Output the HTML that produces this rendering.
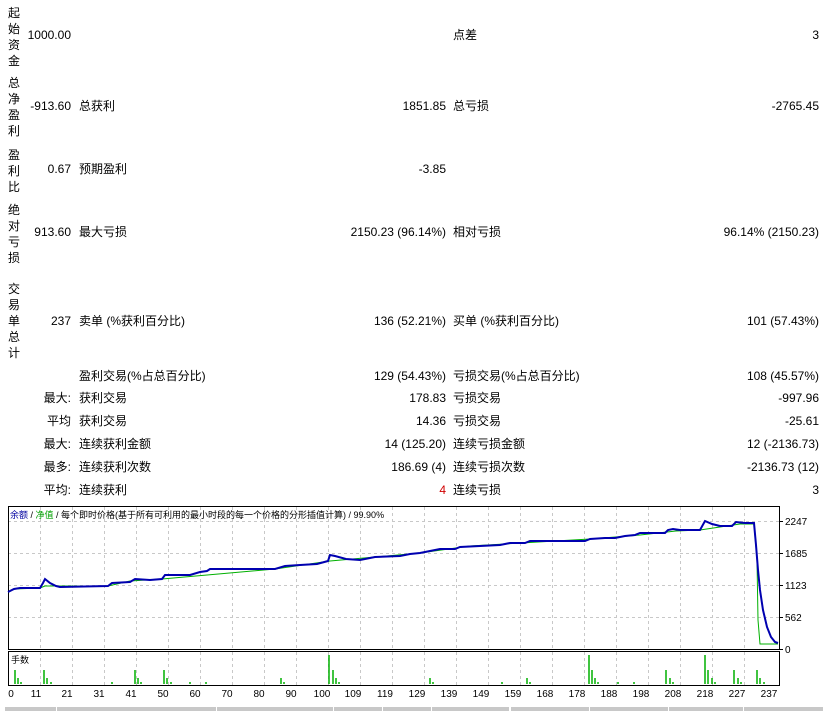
<!DOCTYPE html>
<html><head><meta charset="utf-8"><style>
html,body{margin:0;padding:0;background:#fff;width:836px;height:711px;overflow:hidden;position:relative;font-family:"Liberation Sans","Noto Sans CJK SC",sans-serif;font-size:12px;color:#000}
.t{position:absolute;white-space:nowrap;line-height:14px}
.r{text-align:right}
.v{position:absolute;left:8px;width:13px;line-height:16px;font-size:12px}
</style></head><body>
<div class="v" style="top:5px">起<br>始<br>资<br>金</div>
<div class="v" style="top:75px">总<br>净<br>盈<br>利</div>
<div class="v" style="top:147px">盈<br>利<br>比</div>
<div class="v" style="top:202px">绝<br>对<br>亏<br>损</div>
<div class="v" style="top:281px">交<br>易<br>单<br>总<br>计</div>

<div class="t r" style="top:28px;right:765px">1000.00</div>
<div class="t" style="top:28px;left:453px">点差</div>
<div class="t r" style="top:28px;right:17px">3</div>

<div class="t r" style="top:99px;right:765px">-913.60</div>
<div class="t" style="top:99px;left:79px">总获利</div>
<div class="t r" style="top:99px;right:390px">1851.85</div>
<div class="t" style="top:99px;left:453px">总亏损</div>
<div class="t r" style="top:99px;right:17px">-2765.45</div>

<div class="t r" style="top:162px;right:765px">0.67</div>
<div class="t" style="top:162px;left:79px">预期盈利</div>
<div class="t r" style="top:162px;right:390px">-3.85</div>

<div class="t r" style="top:225px;right:765px">913.60</div>
<div class="t" style="top:225px;left:79px">最大亏损</div>
<div class="t r" style="top:225px;right:390px">2150.23 (96.14%)</div>
<div class="t" style="top:225px;left:453px">相对亏损</div>
<div class="t r" style="top:225px;right:17px">96.14% (2150.23)</div>

<div class="t r" style="top:314px;right:765px">237</div>
<div class="t" style="top:314px;left:79px">卖单 (%获利百分比)</div>
<div class="t r" style="top:314px;right:390px">136 (52.21%)</div>
<div class="t" style="top:314px;left:453px">买单 (%获利百分比)</div>
<div class="t r" style="top:314px;right:17px">101 (57.43%)</div>

<div class="t" style="top:369px;left:79px">盈利交易(%占总百分比)</div>
<div class="t r" style="top:369px;right:390px">129 (54.43%)</div>
<div class="t" style="top:369px;left:453px">亏损交易(%占总百分比)</div>
<div class="t r" style="top:369px;right:17px">108 (45.57%)</div>

<div class="t r" style="top:391px;right:765px">最大:</div>
<div class="t" style="top:391px;left:79px">获利交易</div>
<div class="t r" style="top:391px;right:390px">178.83</div>
<div class="t" style="top:391px;left:453px">亏损交易</div>
<div class="t r" style="top:391px;right:17px">-997.96</div>

<div class="t r" style="top:414px;right:765px">平均</div>
<div class="t" style="top:414px;left:79px">获利交易</div>
<div class="t r" style="top:414px;right:390px">14.36</div>
<div class="t" style="top:414px;left:453px">亏损交易</div>
<div class="t r" style="top:414px;right:17px">-25.61</div>

<div class="t r" style="top:437px;right:765px">最大:</div>
<div class="t" style="top:437px;left:79px">连续获利金额</div>
<div class="t r" style="top:437px;right:390px">14 (125.20)</div>
<div class="t" style="top:437px;left:453px">连续亏损金额</div>
<div class="t r" style="top:437px;right:17px">12 (-2136.73)</div>

<div class="t r" style="top:460px;right:765px">最多:</div>
<div class="t" style="top:460px;left:79px">连续获利次数</div>
<div class="t r" style="top:460px;right:390px">186.69 (4)</div>
<div class="t" style="top:460px;left:453px">连续亏损次数</div>
<div class="t r" style="top:460px;right:17px">-2136.73 (12)</div>

<div class="t r" style="top:483px;right:765px">平均:</div>
<div class="t" style="top:483px;left:79px">连续获利</div>
<div class="t r" style="top:483px;right:390px;color:#d00000">4</div>
<div class="t" style="top:483px;left:453px">连续亏损</div>
<div class="t r" style="top:483px;right:17px">3</div>

<svg style="position:absolute;left:0;top:0" width="836" height="711" xmlns="http://www.w3.org/2000/svg" font-family="Liberation Sans, Noto Sans CJK SC, sans-serif">
<g stroke="#c8c8c8" stroke-dasharray="3,3" stroke-width="1">
<line x1="8" x2="779" y1="521.5" y2="521.5"/><line x1="8" x2="779" y1="553.5" y2="553.5"/><line x1="8" x2="779" y1="585.5" y2="585.5"/><line x1="8" x2="779" y1="617.5" y2="617.5"/>
<path d="M40.5 507V649M72.5 507V649M104.5 507V649M136.5 507V649M168.5 507V649M200.5 507V649M232.5 507V649M264.5 507V649M296.5 507V649M328.5 507V649M360.5 507V649M392.5 507V649M424.5 507V649M456.5 507V649M488.5 507V649M520.5 507V649M552.5 507V649M584.5 507V649M616.5 507V649M648.5 507V649M680.5 507V649M712.5 507V649M744.5 507V649"/>
<path d="M40.5 652V685M72.5 652V685M104.5 652V685M136.5 652V685M168.5 652V685M200.5 652V685M232.5 652V685M264.5 652V685M296.5 652V685M328.5 652V685M360.5 652V685M392.5 652V685M424.5 652V685M456.5 652V685M488.5 652V685M520.5 652V685M552.5 652V685M584.5 652V685M616.5 652V685M648.5 652V685M680.5 652V685M712.5 652V685M744.5 652V685"/>
</g>
<rect x="8.5" y="506.5" width="771" height="143" fill="none" stroke="#000"/>
<rect x="8.5" y="651.5" width="771" height="34" fill="none" stroke="#000"/>
<g stroke="#000"><path d="M779 521.5h4M779 553.5h4M779 585.5h4M779 617.5h4M779 649.5h4"/></g>
<text x="10" y="518" font-size="9" fill="#000"><tspan fill="#0000a0">余额</tspan> / <tspan fill="#00a000">净值</tspan> / 每个即时价格(基于所有可利用的最小时段的每一个价格的分形插值计算) / 99.90%</text>
<polyline fill="none" stroke="#00b000" stroke-width="1" points="9,592 14,589 40,588 45,586 108,586 130,581 162,579 275,569 330,561 420,553 470,546 590,539 640,535 676,531 700,530 740,524 754,524 757,560 758,620 760,644 778,644"/>
<polyline fill="none" stroke="#0000b0" stroke-width="2" points="8,592 14,589 20,588 40,588 43,583 45,579 50,583 56,586 60,587 108,586 112,583 130,582 135,579 150,580 162,579 165,575 190,575 200,572 207,571 210,569 275,569 285,566 300,565 317,564 328,561 330,555 335,556 346,559 360,560 365,559 375,557 400,556 410,554 420,553 430,551 440,549 455,549 460,547 480,546 500,545 510,543 525,543 530,541 585,541 590,539 605,538 615,538 625,536 635,535 640,533 665,533 668,530 673,529 680,530 700,530 705,521 712,524 720,526 732,526 736,522 745,523 754,523 756,545 758,570 760,590 763,610 767,627 771,637 775,642 778,643"/>
<g stroke="#00b000" stroke-width="1.5">
<path d="M15 684v-14M18 684v-6M21 684v-2M44 684v-14M47 684v-6M51 684v-2M112 684v-2M135 684v-14M138 684v-6M141 684v-2M164 684v-14M167 684v-6M171 684v-2M190 684v-2M206 684v-2M281 684v-6M284 684v-2M329 684v-29M333 684v-14M336 684v-6M339 684v-2M430 684v-6M433 684v-2M502 684v-2M527 684v-6M530 684v-2M589 684v-29M592 684v-14M595 684v-6M598 684v-2M618 684v-2M634 684v-2M666 684v-14M670 684v-6M673 684v-2M705 684v-29M708 684v-14M712 684v-6M715 684v-2M734 684v-14M738 684v-6M741 684v-2M757 684v-14M760 684v-6M764 684v-2"/>
</g>
<text x="11" y="663" font-size="9">手数</text>
<g font-size="10" fill="#000">
<text x="785" y="525">2247</text><text x="785" y="557">1685</text><text x="785" y="589">1123</text><text x="785" y="621">562</text><text x="785" y="653">0</text>
</g>
<g font-size="10" fill="#000" text-anchor="middle">
<text x="11" y="697">0</text><text x="36" y="697">11</text><text x="67" y="697">21</text><text x="99" y="697">31</text><text x="131" y="697">41</text><text x="163" y="697">50</text><text x="195" y="697">60</text><text x="227" y="697">70</text><text x="259" y="697">80</text><text x="291" y="697">90</text><text x="322" y="697">100</text><text x="353" y="697">109</text><text x="385" y="697">119</text><text x="417" y="697">129</text><text x="449" y="697">139</text><text x="481" y="697">149</text><text x="513" y="697">159</text><text x="545" y="697">168</text><text x="577" y="697">178</text><text x="609" y="697">188</text><text x="641" y="697">198</text><text x="673" y="697">208</text><text x="705" y="697">218</text><text x="737" y="697">227</text><text x="769" y="697">237</text>
</g>
<g fill="#c8c8c8">
<rect x="5" y="707" width="51" height="4"/><rect x="57" y="707" width="159" height="4"/><rect x="217" y="707" width="116" height="4"/><rect x="334" y="707" width="48" height="4"/><rect x="383" y="707" width="48" height="4"/><rect x="432" y="707" width="77" height="4"/><rect x="511" y="707" width="78" height="4"/><rect x="590" y="707" width="78" height="4"/><rect x="669" y="707" width="74" height="4"/><rect x="744" y="707" width="79" height="4"/>
</g>
</svg>
</body></html>
